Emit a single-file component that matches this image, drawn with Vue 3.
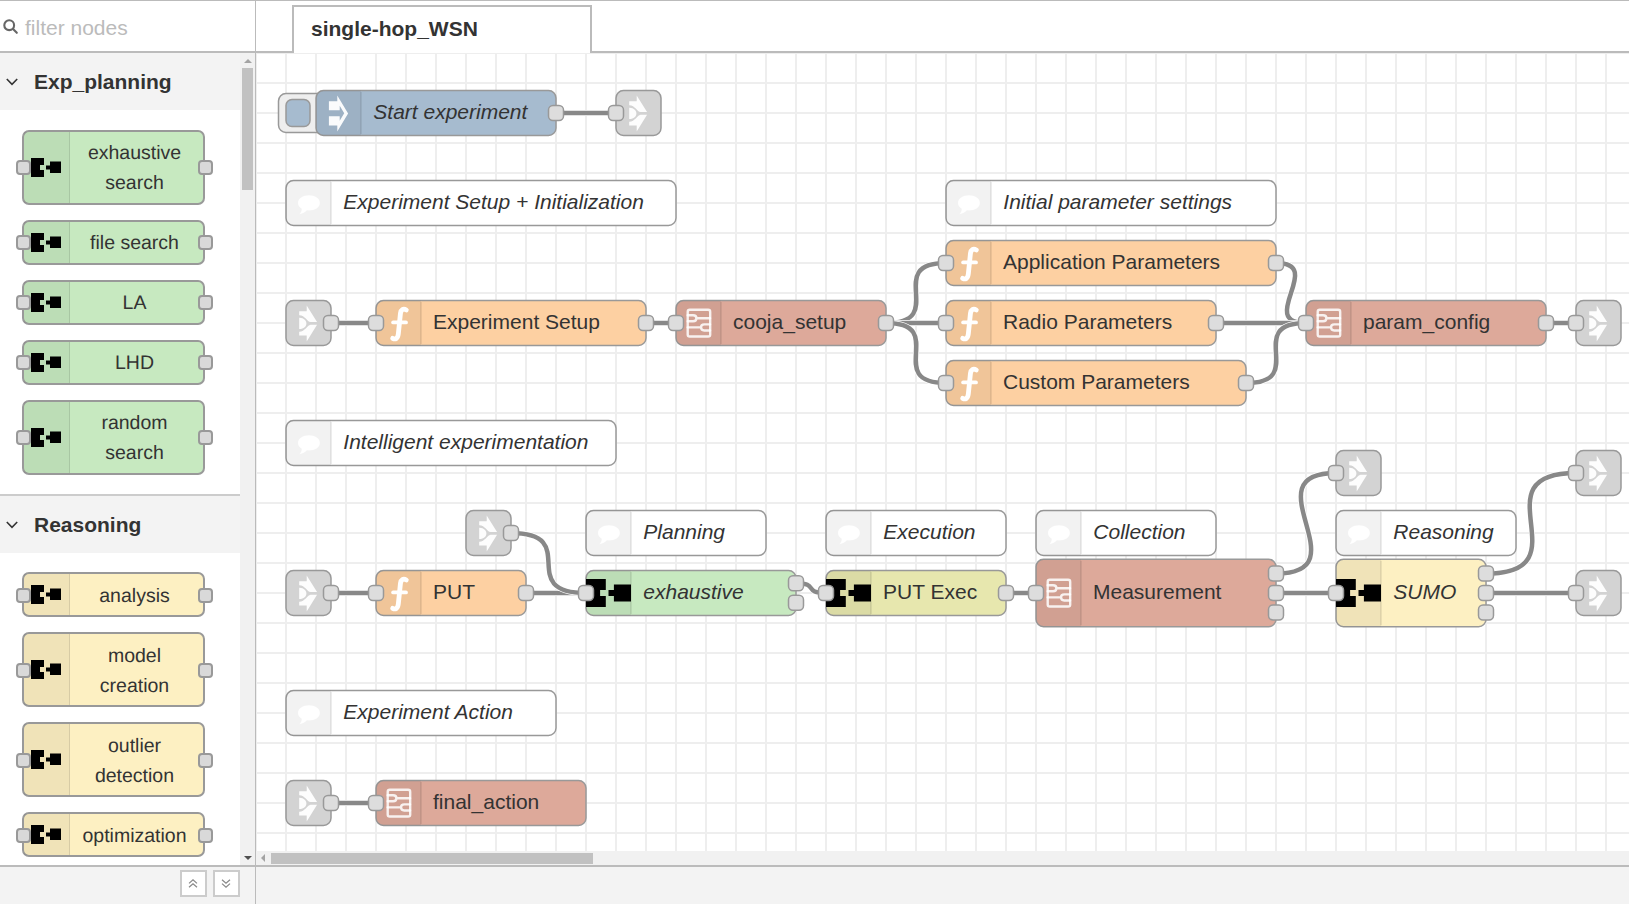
<script setup>
const categories = [
  {
    name: 'Exp_planning',
    tone: 'green',
    nodes: [['exhaustive', 'search'], ['file search'], ['LA'], ['LHD'], ['random', 'search']]
  },
  {
    name: 'Reasoning',
    tone: 'yellow',
    nodes: [['analysis'], ['model', 'creation'], ['outlier', 'detection'], ['optimization']]
  }
]

// Flow coordinates are in editor units: 20 per grid cell, y is the node's centre.
const node = (id, type, x, y, w, label = '', extra = {}) => ({
  id, type, x, y, w, h: 30, label, inputs: 0, outputs: 0, ...extra
})
const io = (inputs, outputs, more = {}) => ({ inputs, outputs, ...more })

const nodes = [
  node('start', 'inject', 40, 40, 160, 'Start experiment', io(0, 1, { italic: true })),
  node('l1', 'link', 240, 40, 30, '', io(1, 0)),
  node('c1', 'comment', 20, 100, 260, 'Experiment Setup + Initialization', { italic: true }),
  node('c2', 'comment', 460, 100, 220, 'Initial parameter settings', { italic: true }),
  node('app', 'func', 460, 140, 220, 'Application Parameters', io(1, 1)),
  node('l2', 'link', 20, 180, 30, '', io(0, 1)),
  node('setup', 'func', 80, 180, 180, 'Experiment Setup', io(1, 1)),
  node('cooja', 'subflow', 280, 180, 140, 'cooja_setup', io(1, 1)),
  node('radio', 'func', 460, 180, 180, 'Radio Parameters', io(1, 1)),
  node('config', 'subflow', 700, 180, 160, 'param_config', io(1, 1)),
  node('l3', 'link', 880, 180, 30, '', io(1, 0)),
  node('custom', 'func', 460, 220, 200, 'Custom Parameters', io(1, 1)),
  node('c3', 'comment', 20, 260, 220, 'Intelligent experimentation', { italic: true }),
  node('l4', 'link', 720, 280, 30, '', io(1, 0)),
  node('l5', 'link', 880, 280, 30, '', io(1, 0)),
  node('l6', 'link', 140, 320, 30, '', io(0, 1)),
  node('c4', 'comment', 220, 320, 120, 'Planning', { italic: true }),
  node('c5', 'comment', 380, 320, 120, 'Execution', { italic: true }),
  node('c6', 'comment', 520, 320, 120, 'Collection', { italic: true }),
  node('c7', 'comment', 720, 320, 120, 'Reasoning', { italic: true }),
  node('l7', 'link', 20, 360, 30, '', io(0, 1)),
  node('put', 'func', 80, 360, 100, 'PUT', io(1, 1)),
  node('exh', 'green', 220, 360, 140, 'exhaustive', io(1, 2, { italic: true })),
  node('exec', 'olive', 380, 360, 120, 'PUT Exec', io(1, 1)),
  node('meas', 'subflow', 520, 360, 160, 'Measurement', io(1, 3, { h: 45 })),
  node('sumo', 'yellow', 720, 360, 100, 'SUMO', io(1, 3, { h: 45, italic: true })),
  node('l8', 'link', 880, 360, 30, '', io(1, 0)),
  node('c8', 'comment', 20, 440, 180, 'Experiment Action', { italic: true }),
  node('l9', 'link', 20, 500, 30, '', io(0, 1)),
  node('final', 'subflow', 80, 500, 140, 'final_action', io(1, 0))
]

const links = [
  ['start', 0, 'l1'], ['l2', 0, 'setup'], ['setup', 0, 'cooja'],
  ['cooja', 0, 'app'], ['cooja', 0, 'radio'], ['cooja', 0, 'custom'],
  ['app', 0, 'config'], ['radio', 0, 'config'], ['custom', 0, 'config'],
  ['config', 0, 'l3'], ['l7', 0, 'put'], ['put', 0, 'exh'], ['l6', 0, 'exh'],
  ['exh', 0, 'exec'], ['exec', 0, 'meas'], ['meas', 0, 'l4'], ['meas', 1, 'sumo'],
  ['sumo', 0, 'l5'], ['sumo', 1, 'l8'], ['l9', 0, 'final']
]

const byId = Object.fromEntries(nodes.map((n) => [n.id, n]))
const portY = (n, i) => (i - (n.outputs - 1) / 2) * 13

const wires = links.map(([from, port, to]) => {
  const a = byId[from]
  const b = byId[to]
  const x1 = a.x + a.w
  const y1 = a.y + portY(a, port)
  const x2 = b.x
  const y2 = b.y
  const d = Math.hypot(x2 - x1, y2 - y1)
  const reach = 75 * Math.min(1, d / 100)
  return `M${x1} ${y1}C${x1 + reach} ${y1} ${x2 - reach} ${y2} ${x2} ${y2}`
})
</script>

<template>
  <div class="editor">
    <div class="main">
      <aside class="palette">
        <div class="search">
          <svg width="16" height="16" viewBox="0 0 16 16"><circle cx="6.2" cy="6.2" r="4.9" /><path d="M9.8 9.8L13.8 13.8" /></svg>
          <span>filter nodes</span>
        </div>
        <div class="palette-body">
          <div class="categories">
            <section v-for="c in categories" :key="c.name" class="category">
              <header>
                <svg width="12" height="8" viewBox="0 0 12 8"><path d="M.8 1L6 6.3L11.2 1" /></svg>
                <span>{{ c.name }}</span>
              </header>
              <div class="entries">
                <div v-for="lines in c.nodes" :key="lines.join()" class="entry" :class="c.tone">
                  <div class="entry-icon">
                    <svg width="30" height="19" viewBox="0 0 30 19">
                      <path d="M0 0H13V7H9V12H13V19H0ZM15 7.5H19V3.5H30V15H19V11.5H15Z" />
                    </svg>
                  </div>
                  <div class="entry-label"><div v-for="l in lines" :key="l">{{ l }}</div></div>
                  <i class="port left"></i><i class="port right"></i>
                </div>
              </div>
            </section>
          </div>
          <div class="vscroll">
            <svg class="up" width="8" height="4" viewBox="0 0 8 4"><path d="M0 4L4 0L8 4Z" /></svg>
            <div class="vthumb"></div>
            <svg class="down" width="8" height="4" viewBox="0 0 8 4"><path d="M0 0L4 4L8 0Z" /></svg>
          </div>
        </div>
      </aside>
      <section class="workspace">
        <div class="tabs"><div class="tab">single-hop_WSN</div><div class="tab-rest"></div></div>
        <svg class="canvas" width="1373" height="798" viewBox="0 0 1373 798">
          <defs>
            <pattern id="grid" width="30" height="30" patternUnits="userSpaceOnUse" x="-1" y="-1">
              <path d="M0 0H30V2H2V30H0Z" fill="#eee" />
            </pattern>
          </defs>
          <rect width="1373" height="798" fill="url(#grid)" />
          <g transform="scale(1.5)">
            <g fill="none">
              <template v-for="(d, i) in wires" :key="i">
                <path :d="d" class="wire-edge" />
                <path :d="d" class="wire" />
              </template>
            </g>
            <g v-for="n in nodes" :key="n.id" :transform="`translate(${n.x} ${n.y})`">
              <template v-if="n.type === 'inject'">
                <rect x="-25" y="-13" width="32" height="26" rx="5" class="button" />
                <rect x="-20" y="-9" width="16" height="18" rx="4" class="body inject" />
              </template>
              <rect :y="-n.h / 2" :width="n.w" :height="n.h" rx="5" class="body" :class="n.type" />
              <template v-if="n.type !== 'link'">
                <path
                  :d="`M5 ${-n.h / 2}H30V${n.h / 2}H5A5 5 0 0 1 0 ${n.h / 2 - 5}V${5 - n.h / 2}A5 5 0 0 1 5 ${-n.h / 2}`"
                  class="shade"
                />
                <path :d="`M30 ${1 - n.h / 2}V${n.h / 2 - 1}`" class="divider" />
              </template>

              <path v-if="n.type === 'inject'" class="glyph"
                d="M8.6 -7.9H14.2V-11.6L21.4 .3L14.2 12.4V8.3H8.6V2.1H15.8V5.2L18.8 .2L15.8 -4.8V-1.8H8.6Z" />
              <g v-else-if="n.type === 'link'" class="glyph">
                <path d="M8.8 -7.8H13.8V-11.6L20.7 -.6H16.4C14 -.9 12.8 -5.1 8.8 -5.2Z" />
                <path d="M8.8 8.4H13.8V12.3L20.7 1.1H16.4C14 1.4 12.8 5.7 8.8 5.8Z" />
                <path d="M8.8 -3.5C12 -3.6 13.6 -1.4 13.6 .3S12 4 8.8 4Z" />
              </g>
              <g v-else-if="n.type === 'func'" class="strokes">
                <path d="M20.2 -8.7C18.2 -9.9 16.6 -8.9 16.3 -6.4L14.9 7.2C14.5 10.5 12.9 11.2 11.1 10.2" stroke-width="3.2" />
                <path d="M11.4 -.4H20" stroke-width="2.5" />
              </g>
              <g v-else-if="n.type === 'subflow'" class="strokes faint" stroke-width="1.6">
                <rect x="7.8" y="-8.8" width="15" height="17.8" rx="1.4" />
                <path d="M7.8 -5.2H11.4Q13.6 -5.2 13.6 -3.2T11.4 -1.2H7.8M13.6 -3.2H22.7M22.7 .9H18.8Q16.7 .9 16.7 2.9T18.8 5H22.7M7.8 2.9H16.7" />
              </g>
              <path v-else-if="n.type === 'comment'" class="glyph"
                d="M15.3 -5.1C19.4 -5.1 22.6 -2.9 22.6 0S19.4 5 15.3 5L14 4.9C12.6 6.4 10.6 7.2 8.8 7.5C9.9 6.6 10.5 5.3 10.5 3.8C8.9 2.9 8 1.5 8 0C8 -2.9 11.2 -5.1 15.3 -5.1Z" />
              <path v-else class="plug"
                d="M0 -9.3H13.2V-2H9.4V2H13.2V9.3H0ZM15 -2H18.6V-5.6H30V5.7H18.6V2H15Z" />

              <text v-if="n.label" :x="n.italic ? 38.2 : 38" y="4.1" :class="{ italic: n.italic }">{{ n.label }}</text>
              <rect v-if="n.inputs" x="-5" y="-5" width="10" height="10" rx="3" class="jack" />
              <rect v-for="p in n.outputs" :key="p" :x="n.w - 5" :y="portY(n, p - 1) - 5" width="10" height="10" rx="3" class="jack" />
            </g>
          </g>
        </svg>
        <div class="hscroll">
          <svg width="4" height="8" viewBox="0 0 4 8"><path d="M4 0L0 4L4 8Z" /></svg>
          <div class="hthumb"></div>
        </div>
      </section>
    </div>
    <footer class="footer">
      <div class="footer-left">
        <button><svg width="10" height="9" viewBox="0 0 10 9"><path d="M1 4.4L5 .8L9 4.4M1 8.3L5 4.7L9 8.3" /></svg></button>
        <button><svg width="10" height="9" viewBox="0 0 10 9"><path d="M1 .7L5 4.3L9 .7M1 4.6L5 8.2L9 4.6" /></svg></button>
      </div>
    </footer>
  </div>
</template>

<style>
body {
  margin: 0;
  overflow: hidden;
}
</style>

<style scoped>
.editor {
  box-sizing: border-box;
  width: 1629px;
  height: 904px;
  display: flex;
  flex-direction: column;
  border-top: 1px solid #bbb;
  background: #fff;
  color: #333;
  font-family: "Liberation Sans", Arial, sans-serif;
  font-size: 21px;
  overflow: hidden;
}
.main {
  height: 864px;
  display: flex;
}
.palette {
  box-sizing: border-box;
  width: 256px;
  flex: none;
  border-right: 1px solid #bbb;
  display: flex;
  flex-direction: column;
}
.search {
  box-sizing: border-box;
  height: 52px;
  flex: none;
  border-bottom: 2px solid #bbb;
  display: flex;
  align-items: center;
  padding: 1px 0 0 3px;
  gap: 6px;
  color: #bbb;
  font-size: 21px;
}
.search svg {
  fill: none;
  stroke: #666;
  stroke-width: 2.1;
  stroke-linecap: round;
}
.search span {
  padding-top: 2px;
}
.palette-body {
  flex: 1;
  min-height: 0;
  display: flex;
}
.categories {
  width: 240px;
  overflow: hidden;
}
.category {
  border-bottom: 2px solid #ccc;
}
.category header {
  height: 57px;
  box-sizing: border-box;
  background: #f3f3f3;
  display: flex;
  align-items: center;
  padding: 0 0 0 6px;
  gap: 16px;
  font-weight: bold;
  font-size: 21px;
}
.category header svg {
  fill: none;
  stroke: #333;
  stroke-width: 1.6;
}
.entries {
  display: flex;
  flex-direction: column;
  gap: 15px;
  padding: 20px 35px 19px 22px;
}
.category + .category .entries {
  padding-top: 19px;
}
.entry {
  box-sizing: border-box;
  position: relative;
  display: flex;
  min-height: 45px;
  border: 2px solid #999;
  border-radius: 7px;
}
.green { background: #c7e9c0; fill: #c7e9c0; }
.yellow { background: #fdf0c2; fill: #fdf0c2; }
.entry-icon {
  box-sizing: border-box;
  width: 46px;
  border-right: 1px solid rgba(0, 0, 0, 0.1);
  background: rgba(0, 0, 0, 0.05);
  display: flex;
  align-items: center;
  padding-left: 7px;
}
.entry-icon svg {
  fill: #000;
}
.entry-label {
  flex: 1;
  padding: 7px 4px 4px 0;
  text-align: center;
  font-size: 19.5px;
  line-height: 30px;
  text-rendering: geometricPrecision;
}
.green .entry-label {
  padding: 6px 4px 5px 0;
}
.port {
  box-sizing: border-box;
  position: absolute;
  top: calc(50% - 7px);
  width: 15px;
  height: 15px;
  border: 2px solid #999;
  border-radius: 4px;
  background: #d9d9d9;
}
.green .port {
  top: calc(50% - 8px);
}
.port.left { left: -8px; }
.port.right { right: -10px; }
.vscroll {
  width: 15px;
  background: #f1f1f1;
  display: flex;
  flex-direction: column;
  align-items: center;
  fill: #a3a3a3;
}
.up { margin: 6px 0 5px; }
.vthumb {
  width: 11px;
  height: 122px;
  background: #c1c1c1;
}
.down {
  margin: auto 0 5px;
  fill: #505050;
}
.workspace {
  flex: 1;
  display: flex;
  flex-direction: column;
}
.tabs {
  height: 52px;
  flex: none;
  display: flex;
}
.tabs::before {
  content: "";
  box-sizing: border-box;
  width: 36px;
  border-bottom: 2px solid #bbb;
}
.tab {
  box-sizing: border-box;
  width: 300px;
  margin-top: 4px;
  border: 2px solid #bbb;
  border-bottom: 0;
  padding: 10px 0 0 17px;
  font-weight: bold;
  line-height: 24px;
}
.tab-rest {
  flex: 1;
  border-bottom: 2px solid #bbb;
}
.canvas {
  display: block;
  flex: none;
}
.body {
  stroke: #999;
  stroke-width: 1;
}
.inject { fill: #a6bbcf; }
.link { fill: #d3d3d3; }
.comment { fill: #fff; }
.func { fill: #fdd0a2; }
.subflow { fill: #dda99a; }
.olive { fill: #e7e7ae; }
.button {
  fill: #eee;
  stroke: #999;
}
.shade { fill: rgba(0, 0, 0, 0.05); }
.divider {
  stroke: #000;
  stroke-opacity: 0.1;
  stroke-width: 1;
}
.glyph { fill: #fff; fill-opacity: 0.95; }
.strokes {
  fill: none;
  stroke: #fff;
  stroke-linecap: round;
}
.faint { stroke-opacity: 0.85; }
.plug { fill: #000; }
.jack {
  fill: #ddd;
  stroke: #999;
  stroke-width: 1;
}
.wire-edge {
  stroke: #fff;
  stroke-width: 4;
}
.wire {
  stroke: #888;
  stroke-width: 3;
}
text {
  fill: #333;
  font-size: 14px;
}
.italic { font-style: italic; }
.hscroll {
  flex: 1;
  background: #f1f1f1;
  display: flex;
  align-items: center;
  fill: #a3a3a3;
  padding-left: 5px;
  gap: 6px;
}
.hthumb {
  width: 322px;
  height: 11px;
  background: #c1c1c1;
}
.footer {
  box-sizing: border-box;
  height: 39px;
  border-top: 2px solid #bbb;
  background: #f3f3f3;
  display: flex;
}
.footer-left {
  box-sizing: border-box;
  width: 256px;
  border-right: 1px solid #bbb;
  padding: 3px 15px 0 0;
  display: flex;
  justify-content: flex-end;
  gap: 6px;
}
.footer button {
  box-sizing: border-box;
  width: 27px;
  height: 27px;
  border: 2px solid #ccc;
  background: #fff;
  display: flex;
  align-items: center;
  justify-content: center;
  padding: 0 1px 0 0;
}
.footer button svg {
  fill: none;
  stroke: #888;
  stroke-width: 1.2;
}
</style>
